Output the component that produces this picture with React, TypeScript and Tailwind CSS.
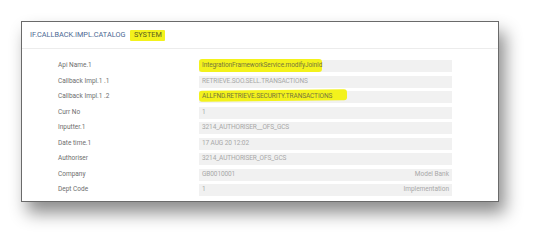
import React from "react";

type Row = { label: string; value: string; hl?: "a" | "b" };

const rows: Row[] = [
  { label: "Api Name.1", value: "IntegrationFrameworkService.modifyJoinId", hl: "a" },
  { label: "Callback Impl.1 .1", value: "RETRIEVE.SOO.SELL.TRANSACTIONS" },
  { label: "Callback Impl.1 .2", value: "ALLFND.RETRIEVE.SECURITY.TRANSACTIONS", hl: "b" },
  { label: "Curr No", value: "1" },
  { label: "Inputter.1", value: "3214_AUTHORISER__OFS_GCS" },
  { label: "Date time.1", value: "17 AUG 20 12:02" },
  { label: "Authoriser", value: "3214_AUTHORISER_OFS_GCS" },
  { label: "Company", value: "GB0010001" },
  { label: "Dept Code", value: "1" },
];

const rightText: Record<string, string> = {
  Company: "Model Bank",
  "Dept Code": "Implementation",
};

export default function App() {
  return (
    <div
      className="w-[541px] h-[245px] bg-white overflow-hidden pt-[21px] pl-[21px]"
      style={{ fontFamily: "Roboto, 'Liberation Sans', sans-serif" }}
    >
      <div className="w-[478px] h-[181px] bg-white border border-[#6a6a6a] shadow-[6px_11px_16px_rgba(0,0,0,0.45)] flex flex-col">
        <div className="h-[27px] border-b border-[#ececec] flex items-center pl-[8px] gap-[5px]">
          <span className="text-[7.3px] text-[#4a6792]">IF.CALLBACK.IMPL.CATALOG</span>
          <span className="bg-[#f3f21c] h-[11px] w-[35px] flex items-center justify-center text-[7.3px] text-[#5a5a20] rounded-[1px]">
            SYSTEM
          </span>
        </div>
        <div className="flex flex-col gap-[3.5px] pt-[11px] pl-[36px]">
          {rows.map((r) => (
            <div key={r.label} className="flex items-center h-[12px]">
              <div className="w-[141px] text-[6.5px] text-[#6e6e6e]">{r.label}</div>
              <div className="relative w-[253px] h-[12px] bg-[#f1f1f1] flex items-center justify-between px-[3px]">
                {r.hl === "a" && (
                  <div className="absolute left-0 top-[-1px] w-[123px] h-[13px] bg-[#f3f21c] rounded-[3px]" />
                )}
                {r.hl === "b" && (
                  <div className="absolute left-0 top-[-1px] w-[148px] h-[11px] bg-[#f3f21c] rounded-[3px] -rotate-[0.6deg]" />
                )}
                <span
                  className={
                    "relative text-[6.5px] tracking-[-0.1px] " +
                    (r.hl ? "text-[#77773c]" : "text-[#a8a8a8]")
                  }
                >
                  {r.value}
                </span>
                {rightText[r.label] && (
                  <span className="relative text-[6.5px] text-[#a8a8a8]">{rightText[r.label]}</span>
                )}
              </div>
            </div>
          ))}
        </div>
      </div>
    </div>
  );
}
